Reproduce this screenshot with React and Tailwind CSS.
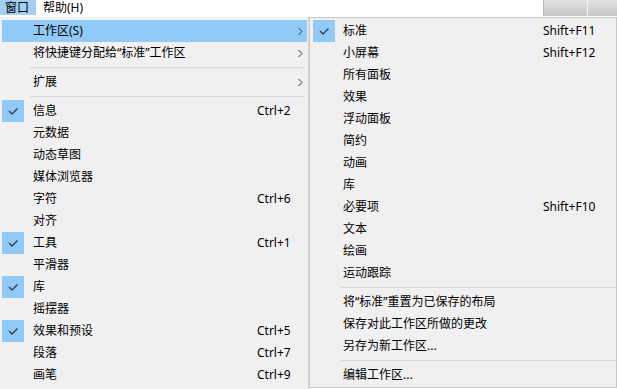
import React from "react";

const FONT = { fontFamily: "'Noto Sans', 'Noto Sans CJK SC', sans-serif" };

// Left "窗口" menu
const WINDOW_ITEMS = [
  { label: "工作区(S)", sub: true, active: true },
  { label: "将快捷键分配给“标准”工作区", sub: true },
  { sep: true },
  { label: "扩展", sub: true },
  { sep: true },
  { label: "信息", checked: true, key: "Ctrl+2" },
  { label: "元数据" },
  { label: "动态草图" },
  { label: "媒体浏览器" },
  { label: "字符", key: "Ctrl+6" },
  { label: "对齐" },
  { label: "工具", checked: true, key: "Ctrl+1" },
  { label: "平滑器" },
  { label: "库", checked: true },
  { label: "摇摆器" },
  { label: "效果和预设", checked: true, key: "Ctrl+5" },
  { label: "段落", key: "Ctrl+7" },
  { label: "画笔", key: "Ctrl+9" },
];

// Workspace submenu
const WORKSPACE_ITEMS = [
  { label: "标准", checked: true, key: "Shift+F11" },
  { label: "小屏幕", key: "Shift+F12" },
  { label: "所有面板" },
  { label: "效果" },
  { label: "浮动面板" },
  { label: "简约" },
  { label: "动画" },
  { label: "库" },
  { label: "必要项", key: "Shift+F10" },
  { label: "文本" },
  { label: "绘画" },
  { label: "运动跟踪" },
  { sep: true },
  { label: "将“标准”重置为已保存的布局" },
  { label: "保存对此工作区所做的更改" },
  { label: "另存为新工作区..." },
  { sep: true },
  { label: "编辑工作区..." },
];

function Check({ on }) {
  return (
    <div className={`w-[22px] h-[22px] shrink-0 ${on ? "bg-[#91c9f7]" : ""}`}>
      {on && (
        <svg width="22" height="22" viewBox="0 0 22 22">
          <polyline
            points="7,11 10,14 15.5,8.5"
            fill="none"
            stroke="#2b3a4a"
            strokeWidth="1.3"
          />
        </svg>
      )}
    </div>
  );
}

function Chevron() {
  return (
    <svg width="6" height="9" viewBox="0 0 6 9" className="shrink-0">
      <polyline points="1.5,1 5,4.5 1.5,8" fill="none" stroke="#3a3a3a" strokeWidth="1" />
    </svg>
  );
}

function Menu({ items, textGap, keyX, sepLeft, sepRight }) {
  return items.map((it, i) =>
    it.sep ? (
      <div key={i} className="h-[7px] flex items-center" style={{ paddingLeft: sepLeft, paddingRight: sepRight }}>
        <div className="h-px w-full bg-[#d7d7d7]" />
      </div>
    ) : (
      <div
        key={i}
        className={`h-[22px] flex items-center text-[12px] text-black ${it.active ? "bg-[#91c9f7]" : ""}`}
      >
        <Check on={it.checked} />
        <span className="whitespace-nowrap" style={{ marginLeft: textGap, width: keyX }}>
          {it.label}
        </span>
        <span className="whitespace-nowrap w-[40px]">{it.key}</span>
        {it.sub && <Chevron />}
      </div>
    )
  );
}

export default function App() {
  return (
    <div className="w-[617px] h-[389px] overflow-hidden bg-white" style={FONT}>
      {/* menu bar */}
      <div className="h-[17px] flex items-start text-[12px] text-black">
        <div className="h-[15px] w-[36px] bg-[#a2cff3] flex items-center pl-[5px]">窗口</div>
        <div className="h-[15px] flex items-center pl-[7px]">帮助(H)</div>
        <div className="ml-auto h-[16px] w-[74px] flex">
          <div className="w-[44px] h-full bg-gradient-to-b from-[#e4e4e4] to-[#c6c6c6] border-l border-[#b8b8b8]" />
          <div className="w-px h-full bg-[#f4f4f4]" />
          <div className="flex-1 h-full bg-gradient-to-b from-[#e4e4e4] to-[#c6c6c6]" />
        </div>
      </div>

      <div className="flex items-start">
        {/* 窗口 menu */}
        <div className="w-[309px] h-[372px] bg-[#f0f0f0] border-r border-[#d4d4d4] pt-[3px] pr-[1px]">
          <div className="pl-0">
            <div className="pl-[2px]">
              <Menu items={WINDOW_ITEMS} textGap={9} keyX={224} sepLeft={28} sepRight={2} />
            </div>
          </div>
        </div>

        {/* 工作区 submenu */}
        <div className="w-[308px] h-[371px] bg-[#f0f0f0] border border-[#c8c8c8] pt-[2px] pl-[3px]">
          <Menu items={WORKSPACE_ITEMS} textGap={8} keyX={200} sepLeft={28} sepRight={0} />
        </div>
      </div>
    </div>
  );
}
